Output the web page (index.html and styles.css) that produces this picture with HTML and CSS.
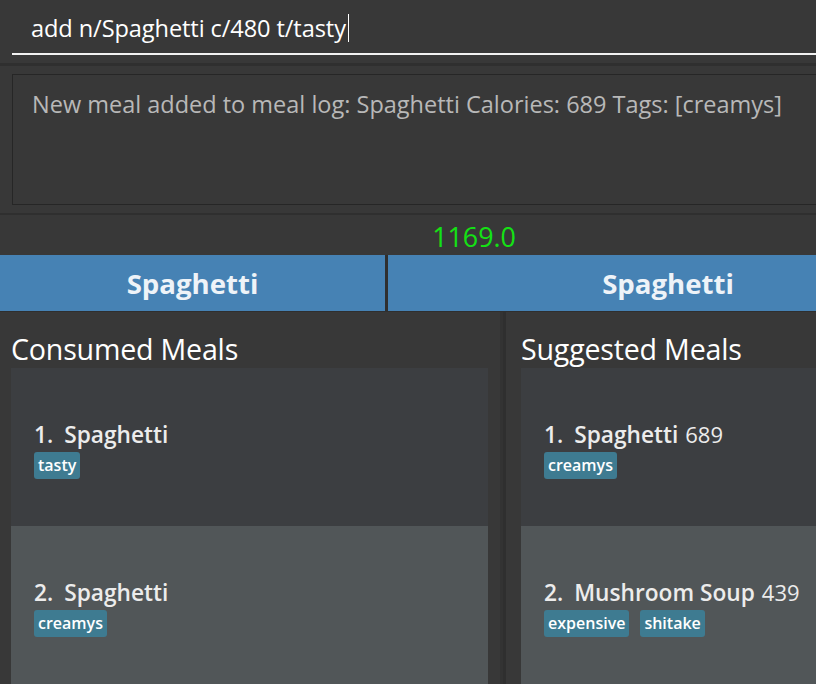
FILE: index.html
```html
<!DOCTYPE html>
<html>
<head>
<meta charset="utf-8">
<link rel="stylesheet" href="styles.css">
</head>
<body>
<div class="app">
  <div class="command">
    <div class="command-field"><span class="command-text">add n/Spaghetti c/480 t/tasty</span><span class="caret"></span></div>
  </div>
  <div class="split"></div>
  <div class="result-pane">
    <div class="result-box">New meal added to meal log: Spaghetti Calories: 689 Tags: [creamys]</div>
  </div>
  <div class="split thin"></div>
  <div class="total">1169.0</div>
  <div class="bars">
    <div class="bar bar-left">Spaghetti</div>
    <div class="bar bar-right">Spaghetti</div>
  </div>
  <div class="panels">
    <div class="panel panel-left">
      <div class="panel-title">Consumed Meals</div>
      <div class="list">
        <div class="cell even">
          <div class="cell-head"><span class="idx">1.</span><span class="name">Spaghetti</span></div>
          <div class="tags"><span class="tag">tasty</span></div>
        </div>
        <div class="cell odd">
          <div class="cell-head"><span class="idx">2.</span><span class="name">Spaghetti</span></div>
          <div class="tags"><span class="tag">creamys</span></div>
        </div>
      </div>
    </div>
    <div class="panel-divider"></div>
    <div class="panel panel-right">
      <div class="panel-title">Suggested Meals</div>
      <div class="list">
        <div class="cell even">
          <div class="cell-head"><span class="idx">1.</span><span class="name">Spaghetti</span><span class="cal">689</span></div>
          <div class="tags"><span class="tag">creamys</span></div>
        </div>
        <div class="cell odd">
          <div class="cell-head"><span class="idx">2.</span><span class="name">Mushroom Soup</span><span class="cal">439</span></div>
          <div class="tags"><span class="tag">expensive</span><span class="tag">shitake</span></div>
        </div>
      </div>
    </div>
  </div>
</div>
</body>
</html>
```

FILE: styles.css
```css
html, body {
  margin: 0;
  padding: 0;
  background: #383838;
  overflow: hidden;
}

.app {
  width: 948px;
  height: 684px;
  background: #383838;
  font-family: "Open Sans", "Noto Sans", sans-serif;
  display: flex;
  flex-direction: column;
  overflow: hidden;
}

.command {
  height: 63px;
  padding-left: 12px;
  box-sizing: border-box;
}

.command-field {
  height: 55px;
  border-bottom: 2px solid #f2f2f2;
  box-sizing: border-box;
  padding-left: 19px;
  padding-top: 2px;
  display: flex;
  align-items: center;
  color: #ffffff;
  font-size: 23.6px;
  letter-spacing: -0.1px;
}

.caret {
  display: inline-block;
  width: 1px;
  height: 28px;
  background: #ffffff;
  margin-left: 2px;
}

.split {
  height: 3px;
  background: #2f2f2f;
}

.split.thin {
  height: 2px;
}

.result-pane {
  height: 147px;
  padding: 8px 0 8px 12px;
  box-sizing: border-box;
}

.result-box {
  height: 100%;
  border: 1px solid #262626;
  border-right: none;
  box-sizing: border-box;
  padding: 13px 0 0 19px;
  color: #b8b8b8;
  font-size: 23.5px;
  white-space: nowrap;
}

.total {
  height: 40px;
  display: flex;
  align-items: center;
  justify-content: center;
  color: #14e214;
  font-size: 26.8px;
  padding-top: 2px;
  box-sizing: border-box;
}

.bars {
  height: 57px;
  display: flex;
  gap: 3px;
  background: #2f2f2f;
}

.bar {
  background: #4682b4;
  color: #eef3f8;
  font-weight: 700;
  font-size: 27.6px;
  display: flex;
  align-items: center;
  justify-content: center;
  height: 56px;
}

.bar-left { width: 385px; }
.bar-right { flex: 1; }

.panels {
  flex: 1;
  display: flex;
  min-height: 0;
}

.panel {
  display: flex;
  flex-direction: column;
  min-height: 0;
}

.panel-left {
  width: 500px;
  padding: 0 12px 0 11px;
  box-sizing: border-box;
}

.panel-divider {
  width: 6px;
  background: #2f2f2f;
  border-left: 3px solid #333333;
  box-sizing: border-box;
}

.panel-right {
  flex: 1;
  padding-left: 15px;
}

.panel-title {
  height: 57px;
  color: #ffffff;
  font-size: 28.6px;
  display: flex;
  align-items: flex-end;
  line-height: 38px;
  box-sizing: border-box;
  white-space: nowrap;
  letter-spacing: -0.2px;
}

.list {
  flex: 1;
  display: flex;
  flex-direction: column;
}

.cell {
  height: 158px;
  flex: none;
  padding: 51px 0 0 23px;
  box-sizing: border-box;
}

.cell.even { background: #3c3e41; }
.cell.odd { background: #515658; }

.cell-head {
  display: flex;
  align-items: baseline;
  color: #ececec;
  font-size: 22.7px;
  font-weight: 600;
  height: 32px;
  white-space: nowrap;
}

.idx {
  margin-right: 11px;
}

.cal {
  font-weight: 400;
  font-size: 22px;
  margin-left: 7px;
}

.tags {
  display: flex;
  gap: 11px;
  margin-top: 1px;
}

.tag {
  background: #3e7b91;
  color: #ffffff;
  font-size: 16px;
  font-weight: 600;
  padding: 2px 4px;
  border-radius: 3px;
  line-height: 23px;
}
```
